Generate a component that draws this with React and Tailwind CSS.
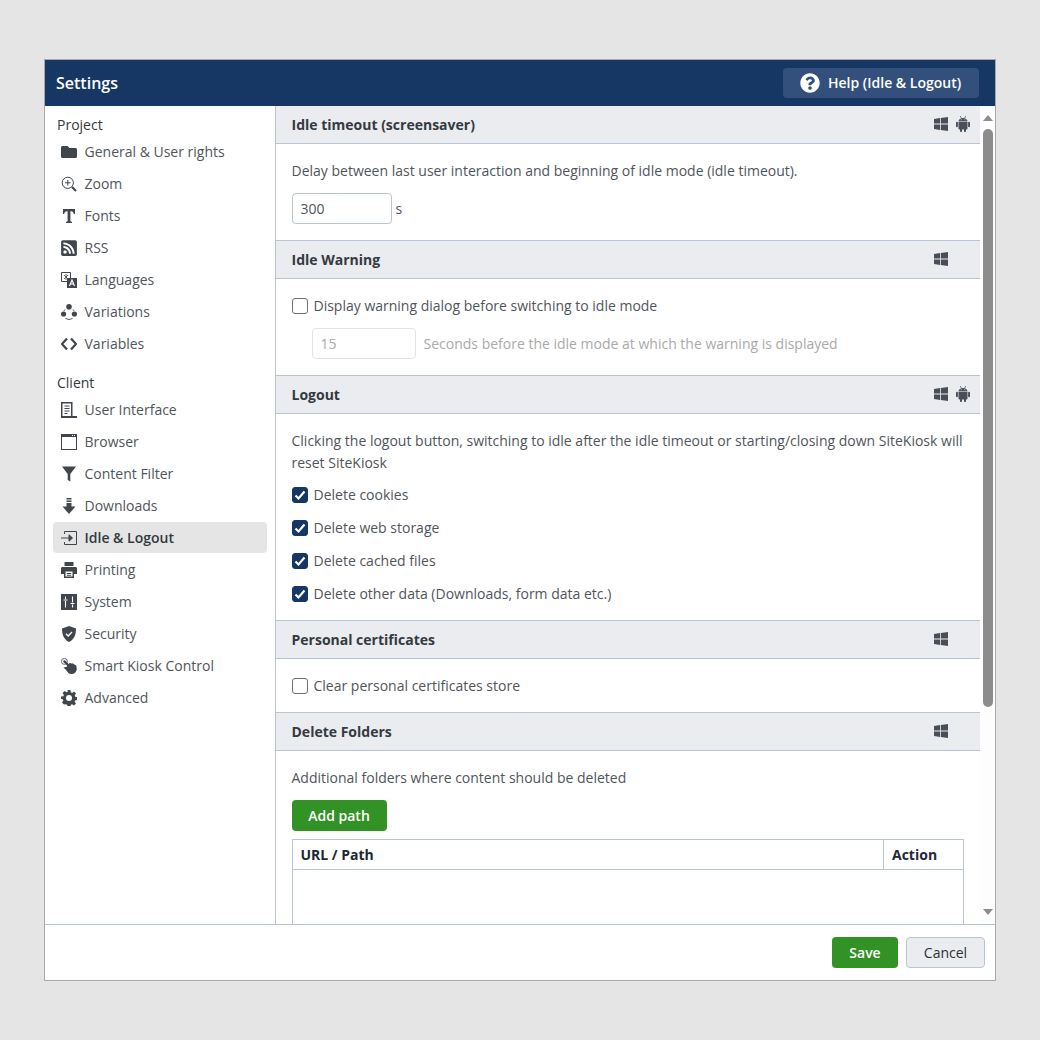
import React from 'react'
import { FaFolder, FaRssSquare, FaQuestionCircle } from 'react-icons/fa'

const ZoomIcon = () => (
  <svg viewBox="0 0 16 16" className="w-4 h-4" fill="none" stroke="currentColor">
    <circle cx="6.800" cy="6.800" r="5.600" strokeWidth="1" />
    <path d="M6.800 4v5.600M4 6.800h5.600" strokeWidth="1" />
    <path d="M11 11l4 4" strokeWidth="2.200" />
  </svg>
)

const FontIcon = () => (
  <svg viewBox="0 0 16 16" className="w-4 h-4" fill="currentColor">
    <path d="M2 1h12v5h-1.200c-.3-1.800-1-2.800-2.800-2.800H9.400v9.600c0 .7.4 1 1.600 1V15H5v-1.200c1.200 0 1.600-.3 1.600-1V3.200H6c-1.800 0-2.500 1-2.800 2.800H2z" />
  </svg>
)

const LanguageIcon = () => (
  <svg viewBox="0 0 16 16" className="w-4 h-4">
    <path d="M.5.5h9v9h-9z" fill="none" stroke="currentColor" />
    <path d="M3 3l4 4M7 3l-4 4M5 2v6" stroke="currentColor" strokeWidth=".8" />
    <path d="M6 6h10v10H6z" fill="currentColor" />
    <path d="M8.500 14l2.500-6 2.500 6M9.500 12h3" fill="none" stroke="#fff" strokeWidth="1.100" />
  </svg>
)

const VariationIcon = () => (
  <svg viewBox="0 0 16 16" className="w-4 h-4" fill="currentColor">
    <circle cx="8" cy="2.800" r="2.800" />
    <circle cx="2.600" cy="10" r="2.600" />
    <circle cx="13.400" cy="10" r="2.600" />
    <path d="M4 5.400A6 6 0 0 0 3 7M12 5.400a6 6 0 0 1 1 1.600M4.400 14.400a6.500 6.500 0 0 0 7.200 0" fill="none" stroke="currentColor" strokeWidth=".9" />
  </svg>
)

const CodeIcon = () => (
  <svg viewBox="0 0 16 16" className="w-4 h-4" fill="none" stroke="currentColor" strokeWidth="2.200">
    <path d="M6 2.500L1 8l5 5.500M10 2.500L15 8l-5 5.500" />
  </svg>
)

const UserInterfaceIcon = () => (
  <svg viewBox="0 0 16 16" className="w-4 h-4" fill="currentColor">
    <path d="M0 0h11.500v14H16v2H0zM1.500 1.500V14h8.500V1.500z" fillRule="evenodd" />
    <path d="M3.500 3.500h5v1h-5zM3.500 6h5v1h-5zM3.500 8.500h5v1h-5zM3.500 11h3v1h-3z" />
  </svg>
)

const BrowserIcon = () => (
  <svg viewBox="0 0 16 16" className="w-4 h-4" fill="currentColor">
    <path d="M0 0h16v16H0zM1 3v12h14V3z" fillRule="evenodd" />
    <path d="M11 1h1v1h-1zM13 1h1v1h-1z" fill="#fff" />
  </svg>
)

const FilterIcon = () => (
  <svg viewBox="0 0 16 16" className="w-4 h-4" fill="currentColor">
    <path d="M1 .500h14L9.300 8v7.500L6.700 14V8z" />
  </svg>
)

const DownloadIcon = () => (
  <svg viewBox="0 0 16 16" className="w-4 h-4" fill="currentColor">
    <path d="M5.500 0h5v1.500h-5zM5.500 2.500h5V4h-5zM5.500 5h5v3.500h4L8 16 1.500 8.500h4z" />
  </svg>
)

const LogoutIcon = () => (
  <svg viewBox="0 0 16 16" className="w-4 h-4" fill="none" stroke="currentColor">
    <path d="M3.500 4V1.500h12v13h-12V12" strokeWidth="1" />
    <path d="M0 8h9" strokeWidth="1" />
    <path d="M8 4.800L11.500 8 8 11.200z" fill="currentColor" strokeWidth="1" />
  </svg>
)

const PrintIcon = () => (
  <svg viewBox="0 0 16 16" className="w-4 h-4" fill="currentColor">
    <path d="M3.500 0h9v4h-9zM1.500 5h13c.8 0 1.500.7 1.500 1.500V12h-3v4H3v-4H0V6.500C0 5.700.7 5 1.500 5z" />
    <path d="M4.500 9.500h7V14.500h-7z" fill="#fff" />
    <path d="M5.800 11h4.400v.9H5.800zM5.800 12.800h4.400v.9H5.800z" />
  </svg>
)

const SystemIcon = () => (
  <svg viewBox="0 0 16 16" className="w-4 h-4" fill="currentColor">
    <path d="M0 0h16v16H0z" />
    <path d="M4.500 2.500v2.500M4.500 7v6.500M11.500 2.500v6M11.500 10.500v3" stroke="#fff" strokeWidth="1.100" />
    <path d="M2.500 6h4M9.500 9.500h4" stroke="#fff" strokeWidth="1.100" />
  </svg>
)

const ShieldIcon = () => (
  <svg viewBox="0 0 16 16" className="w-4 h-4" fill="currentColor">
    <path d="M8 0l7 2.500c0 6-1.500 10.800-7 13.500C2.500 13.300 1 8.500 1 2.500z" />
    <path d="M5 7.800l2.200 2.200L11 6" fill="none" stroke="#fff" strokeWidth="1.300" />
  </svg>
)

const TouchIcon = () => (
  <svg viewBox="0 0 16 16" className="w-4 h-4" fill="currentColor">
    <circle cx="3.400" cy="3.400" r="3" fill="none" stroke="currentColor" strokeWidth=".8" />
    <path d="M3.400 3.400L8 8" fill="none" stroke="currentColor" strokeWidth="2.400" strokeLinecap="round" />
    <circle cx="10.600" cy="10.800" r="5.200" />
    <circle cx="9" cy="6.200" r="1.200" />
    <circle cx="11.500" cy="6.600" r="1.200" />
    <circle cx="14" cy="8.200" r="1.200" />
    <path d="M2.500 9.500L6 8.800l1 5z" />
  </svg>
)

const GearIcon = () => (
  <svg viewBox="0 0 16 16" className="w-4 h-4" fill="currentColor">
    <path d="M6.600 0h2.800l.4 2.300 1.300.6L13 1.600l2 2-1.300 1.900.5 1.300 2.300.4v2.800l-2.300.4-.6 1.300 1.400 1.900-2 2-1.900-1.400-1.300.6-.4 2.300H6.600l-.4-2.300-1.300-.6L3 14.400l-2-2 1.300-1.900-.5-1.300L0 8.800V6.600l2.300-.4.6-1.300L1.600 3l2-2 1.900 1.300 1.300-.5zM8 5a3 3 0 1 0 0 6 3 3 0 0 0 0-6z" fillRule="evenodd" />
  </svg>
)

const WindowsIcon = () => (
  <svg viewBox="0 0 14 14" className="w-[14px] h-[14px]" fill="currentColor">
    <path d="M0 2l6-.9v5.400H0zM6.800 1L14 0v6.500H6.800zM0 7.500h6v5.400l-6-.9zM6.800 7.500H14V14l-7.200-1z" />
  </svg>
)

const AndroidIcon = () => (
  <svg viewBox="0 0 16 16" className="w-4 h-4" fill="currentColor">
    <path d="M3.500 5.200C3.700 3.200 5.500 1.900 8 1.900s4.300 1.300 4.500 3.300z" />
    <path d="M5.200 0l1.300 2.200M10.800 0L9.500 2.200" stroke="currentColor" strokeWidth=".7" fill="none" />
    <path d="M3.500 5.800h9v6.700c0 .5-.4.9-.9.900H4.400c-.5 0-.9-.4-.9-.9z" />
    <path d="M5 13h2v2c0 .6-.4 1-1 1s-1-.4-1-1zM9 13h2v2c0 .6-.4 1-1 1s-1-.4-1-1z" />
    <rect x="1" y="5.800" width="1.900" height="5.400" rx=".95" />
    <rect x="13.100" y="5.800" width="1.900" height="5.400" rx=".95" />
    <circle cx="6.200" cy="3.700" r=".5" fill="#eaecf0" />
    <circle cx="9.800" cy="3.700" r=".5" fill="#eaecf0" />
  </svg>
)

const projectItems = [
  { label: 'General & User rights', icon: <FaFolder className="w-4 h-4" /> },
  { label: 'Zoom', icon: <ZoomIcon /> },
  { label: 'Fonts', icon: <FontIcon /> },
  { label: 'RSS', icon: <FaRssSquare className="w-[18px] h-[18px]" /> },
  { label: 'Languages', icon: <LanguageIcon /> },
  { label: 'Variations', icon: <VariationIcon /> },
  { label: 'Variables', icon: <CodeIcon /> },
]

const clientItems = [
  { label: 'User Interface', icon: <UserInterfaceIcon /> },
  { label: 'Browser', icon: <BrowserIcon /> },
  { label: 'Content Filter', icon: <FilterIcon /> },
  { label: 'Downloads', icon: <DownloadIcon /> },
  { label: 'Idle & Logout', icon: <LogoutIcon />, active: true },
  { label: 'Printing', icon: <PrintIcon /> },
  { label: 'System', icon: <SystemIcon /> },
  { label: 'Security', icon: <ShieldIcon /> },
  { label: 'Smart Kiosk Control', icon: <TouchIcon /> },
  { label: 'Advanced', icon: <GearIcon /> },
]

const NavItem = ({ item }) => (
  <div className={`flex items-center h-[31px] mb-px pl-2 rounded ${item.active ? 'bg-[#e5e5e5] text-[#343a40] font-semibold' : 'text-[#50555c]'}`}>
    <span className="w-4 h-4 flex items-center justify-center shrink-0 text-[#41464d]">{item.icon}</span>
    <span className="ml-[7.5px]">{item.label}</span>
  </div>
)

const Section = ({ title, android, first, children, bodyClass = 'pb-4' }) => (
  <section>
    <div className={`flex items-center h-[38px] pl-[15.5px] bg-[#eaecf0] border-b border-[#b9c5d6] ${first ? '' : 'border-t h-[39px]'}`}>
      <h2 className="font-bold text-[#343a40]">{title}</h2>
      <div className="ml-auto mb-[2px] flex items-center w-[46px] text-[#4a4f57]">
        <WindowsIcon />
        {android && <span className="ml-[7px]"><AndroidIcon /></span>}
      </div>
    </div>
    <div className={`pl-[15.5px] pr-4 pt-4 ${bodyClass}`}>{children}</div>
  </section>
)

const Checkbox = ({ checked, label }) => (
  <label className="flex items-center h-[22px]">
    <span className={`w-4 h-4 rounded-[3px] border flex items-center justify-center shrink-0 ${checked ? 'bg-[#163664] border-[#163664]' : 'bg-white border-[#6c7178]'}`}>
      {checked && (
        <svg viewBox="0 0 12 12" className="w-3 h-3" fill="none" stroke="#fff" strokeWidth="2.200">
          <path d="M1.500 6.500l3 3 6-7" />
        </svg>
      )}
    </span>
    <span className="ml-[6px]">{label}</span>
  </label>
)

const App = () => {
  return (
    <div className="h-screen flex items-center justify-center bg-[#e5e5e5] font-['Open_Sans',sans-serif] text-[14px] leading-[22px] text-[#50555c]">
      <div className="w-[952px] h-[922px] flex flex-col bg-white border border-[#a9a9a9]">
        <header className="h-[46px] shrink-0 flex items-center justify-between pl-[11px] pr-4 bg-[#163664]">
          <h1 className="text-white font-semibold text-[16px]">Settings</h1>
          <button className="flex items-center h-[30px] w-[196px] pl-[17px] rounded bg-[#334f7b] text-white font-semibold">
            <FaQuestionCircle className="w-5 h-5" />
            <span className="ml-2">Help (Idle &amp; Logout)</span>
          </button>
        </header>

        <div className="flex flex-1 min-h-0">
          <nav className="w-[231px] shrink-0 border-r border-[#b9c5d6] px-2 pt-2">
            <div className="h-[22px] pl-1 font-medium text-[#343a40]">Project</div>
            {projectItems.map(item => <NavItem key={item.label} item={item} />)}
            <div className="h-[22px] pl-1 mt-[13px] font-medium text-[#343a40]">Client</div>
            {clientItems.map(item => <NavItem key={item.label} item={item} />)}
          </nav>

          <main className="flex-1 overflow-hidden">
            <Section title="Idle timeout (screensaver)" android first>
              <p>Delay between last user interaction and beginning of idle mode (idle timeout).</p>
              <div className="flex items-center mt-[11px]">
                <input readOnly value="300" className="w-[100px] h-[31px] px-2 border border-[#b9c5d6] rounded text-[#50555c] outline-none" />
                <span className="ml-1">s</span>
              </div>
            </Section>

            <Section title="Idle Warning">
              <Checkbox label="Display warning dialog before switching to idle mode" />
              <div className="flex items-center mt-[11px] ml-5">
                <input readOnly value="15" className="w-[104px] h-[31px] px-2 border border-[#dfe4ec] rounded text-[#aaa] outline-none" />
                <span className="ml-2 text-[#aaaaaa]">Seconds before the idle mode at which the warning is displayed</span>
              </div>
            </Section>

            <Section title="Logout" android bodyClass="pb-[15px]">
              <p>Clicking the logout button, switching to idle after the idle timeout or starting/closing down SiteKiosk will reset SiteKiosk</p>
              <div className="flex flex-col gap-[11px] mt-[10px]">
                <Checkbox checked label="Delete cookies" />
                <Checkbox checked label="Delete web storage" />
                <Checkbox checked label="Delete cached files" />
                <Checkbox checked label="Delete other data (Downloads, form data etc.)" />
              </div>
            </Section>

            <Section title="Personal certificates" bodyClass="pb-[15px]">
              <Checkbox label="Clear personal certificates store" />
            </Section>

            <Section title="Delete Folders">
              <p>Additional folders where content should be deleted</p>
              <button className="block mt-[11px] h-[31px] w-[95px] rounded bg-[#329225] text-white font-semibold">Add path</button>
              <div className="mt-2 border border-[#b9c5d6] h-[120px]">
                <div className="flex h-[30px] border-b border-[#b9c5d6] font-bold text-[#212833]">
                  <div className="flex-1 flex items-center pl-2">URL / Path</div>
                  <div className="w-[80px] flex items-center pl-2 border-l border-[#b9c5d6]">Action</div>
                </div>
              </div>
            </Section>
          </main>

          <div className="w-[15px] shrink-0 flex flex-col items-center bg-[#fdfdfd] py-2">
            <svg viewBox="0 0 10 6" className="w-[10px] h-[6px] mt-[1px] text-[#8c8c8c]" fill="currentColor"><path d="M5 0l5 6H0z" /></svg>
            <div className="w-[10px] h-[578px] mt-[8px] rounded-full bg-[#8c8c8c]" />
            <svg viewBox="0 0 10 6" className="w-[10px] h-[6px] mt-auto mb-[1px] text-[#8c8c8c]" fill="currentColor"><path d="M5 6L0 0h10z" /></svg>
          </div>
        </div>

        <footer className="h-[56px] shrink-0 flex items-center justify-end gap-2 pr-[10px] border-t border-[#b9c5d6]">
          <button className="w-[66px] h-[31px] rounded bg-[#329225] text-white font-semibold">Save</button>
          <button className="w-[79px] h-[31px] rounded border border-[#b9c5d6] bg-[#eaecf0] text-[#2b313a]">Cancel</button>
        </footer>
      </div>
    </div>
  )
}

export default App
